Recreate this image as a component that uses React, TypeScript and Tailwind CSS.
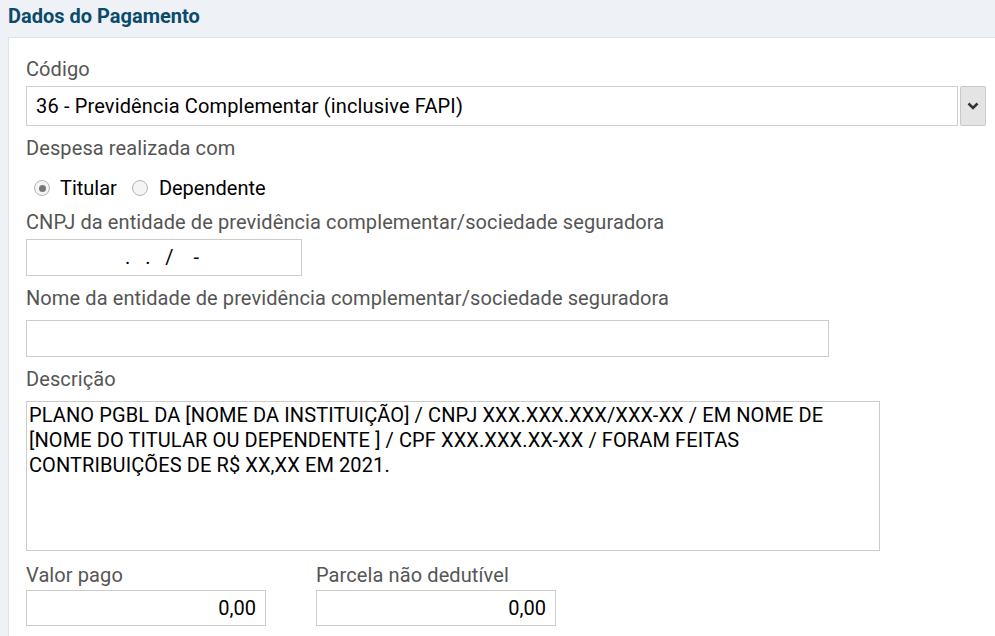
export default function App() {
  const label = "block text-[20px] leading-[24px] tracking-[0.1px] text-[#555555]"
  const input = "block border border-[#cccccc] bg-white text-[20px] text-black outline-none"

  return (
    <div className="min-h-screen w-[995px] overflow-hidden bg-[#eef2f6] font-['Roboto',sans-serif]">
      <div className="flex h-[37px] items-center px-2 pb-[5px]">
        <h2 className="text-[20px] font-bold leading-[24px] text-[#0b4a6b]">Dados do Pagamento</h2>
      </div>
      <div className="ml-2 h-[600px] border-t border-l border-[#dde3ea] bg-white pl-[17px] pt-[19px]">
        <label className={label}>Código</label>
        <div className="mt-[5px] flex items-stretch">
          <div className="flex h-[40px] w-[932px] items-center border border-[#d0d0d0] px-[9px] text-[20px] tracking-[0.15px] text-black">
            36 - Previdência Complementar (inclusive FAPI)
          </div>
          <div className="ml-[2px] flex h-[40px] w-[26px] items-center justify-center rounded-[2px] border border-[#c8c8c8] bg-[#e4e4e4]">
            <svg width="12" height="8" viewBox="0 0 12 8">
              <path d="M1.5 1.5 L6 6 L10.5 1.5" fill="none" stroke="#333" strokeWidth="2.5" />
            </svg>
          </div>
        </div>

        <label className={label + " mt-[10px]"}>Despesa realizada com</label>
        <div className="mt-[16px] flex h-[24px] items-center pl-[8px] text-[20px] leading-[24px] text-black">
          <span className="flex h-[16px] w-[16px] items-center justify-center rounded-full border border-[#b5b5b5] bg-[#f4f4f4]">
            <span className="h-[7px] w-[7px] rounded-full bg-[#777777]"></span>
          </span>
          <span className="ml-[10px]">Titular</span>
          <span className="ml-[15px] h-[16px] w-[16px] rounded-full border border-[#b5b5b5] bg-[#f4f4f4]"></span>
          <span className="ml-[11px]">Dependente</span>
        </div>

        <label className={label + " mt-[10px]"}>CNPJ da entidade de previdência complementar/sociedade seguradora</label>
        <div className={input + " mt-[5px] h-[37px] w-[276px] pl-[98px] leading-[35px] whitespace-pre"}>{".   .   /    -"}</div>

        <label className={label + " mt-[10px]"}>Nome da entidade de previdência complementar/sociedade seguradora</label>
        <div className={input + " mt-[10px] h-[37px] w-[803px]"}></div>

        <label className={label + " mt-[10px]"}>Descrição</label>
        <div className="mt-[10px] h-[150px] w-[854px] border border-[#cccccc] px-[2px] pt-[1px] text-[20px] leading-[25px] tracking-[0.1px] text-black">
          PLANO PGBL DA [NOME DA INSTITUIÇÃO] / CNPJ XXX.XXX.XXX/XXX-XX / EM NOME DE [NOME DO TITULAR OU DEPENDENTE ] / CPF XXX.XXX.XX-XX / FORAM FEITAS CONTRIBUIÇÕES DE R$ XX,XX EM 2021.
        </div>

        <div className="mt-[12px] flex gap-[50px]">
          <div>
            <label className={label}>Valor pago</label>
            <div className={input + " mt-[3px] h-[36px] w-[240px] pr-[9px] text-right leading-[34px]"}>0,00</div>
          </div>
          <div>
            <label className={label}>Parcela não dedutível</label>
            <div className={input + " mt-[3px] h-[36px] w-[240px] pr-[9px] text-right leading-[34px]"}>0,00</div>
          </div>
        </div>
      </div>
    </div>
  )
}
